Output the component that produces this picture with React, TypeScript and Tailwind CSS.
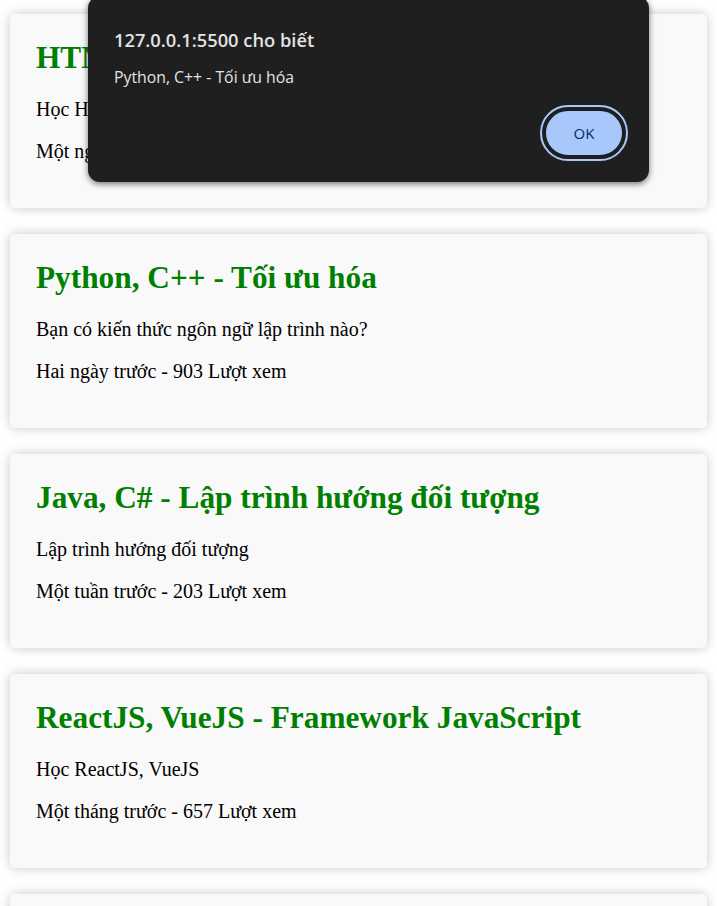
const posts = [
  { title: 'HTML, CSS - Thiết kế web', desc: 'Học HTML, CSS cơ bản', meta: 'Một ngày trước - 1205 Lượt xem' },
  { title: 'Python, C++ - Tối ưu hóa', desc: 'Bạn có kiến thức ngôn ngữ lập trình nào?', meta: 'Hai ngày trước - 903 Lượt xem' },
  { title: 'Java, C# - Lập trình hướng đối tượng', desc: 'Lập trình hướng đối tượng', meta: 'Một tuần trước - 203 Lượt xem' },
  { title: 'ReactJS, VueJS - Framework JavaScript', desc: 'Học ReactJS, VueJS', meta: 'Một tháng trước - 657 Lượt xem' },
  { title: 'NodeJS - Lập trình Backend', desc: 'Học NodeJS', meta: 'Hai tháng trước - 412 Lượt xem' },
];

export default function App() {
  return (
    <div className="relative h-[906px] bg-white overflow-hidden">
      <div className="flex flex-col gap-[26px] px-[10px] pt-[14px] pb-[20px] font-['Liberation_Serif',serif] text-black">
        {posts.map((p, i) => (
          <div
            key={i}
            className="flex flex-col h-[194px] shrink-0 rounded-[5px] bg-[#f9f9f9] px-[26px] pt-[26px] shadow-[0_0_12px_rgba(0,0,0,0.22)]"
          >
            <h2 className="text-[31.3px] leading-[36px] font-bold text-[#008000]">{p.title}</h2>
            <p className="mt-[21px] text-[20px] leading-[24px]">{p.desc}</p>
            <p className="mt-[18px] text-[20px] leading-[24px]">{p.meta}</p>
          </div>
        ))}
      </div>

      {/* alert dialog */}
      <div className="absolute left-[88px] top-[-4px] w-[561px] flex flex-col rounded-[12px] bg-[#1f1f1f] pl-[26px] pr-[21px] pt-[32px] pb-[21px] shadow-[0_2px_6px_rgba(0,0,0,0.55)] font-['Open_Sans',sans-serif] text-[#e3e3e3]">
        <div className="text-[18.3px] leading-[24px] font-semibold">127.0.0.1:5500 cho biết</div>
        <div className="mt-[14px] text-[15.8px] leading-[22px]">Python, C++ - Tối ưu hóa</div>
        <div className="mt-[17px] flex justify-end">
          <div className="w-[88px] h-[56px] rounded-full border-2 border-[#a8c7fa] p-[2px]">
            <div className="w-full h-full rounded-full border-2 border-[#1f1f1f] bg-[#a8c7fa] flex items-center justify-center text-[15px] text-[#062e6f]">
              OK
            </div>
          </div>
        </div>
      </div>
    </div>
  );
}
